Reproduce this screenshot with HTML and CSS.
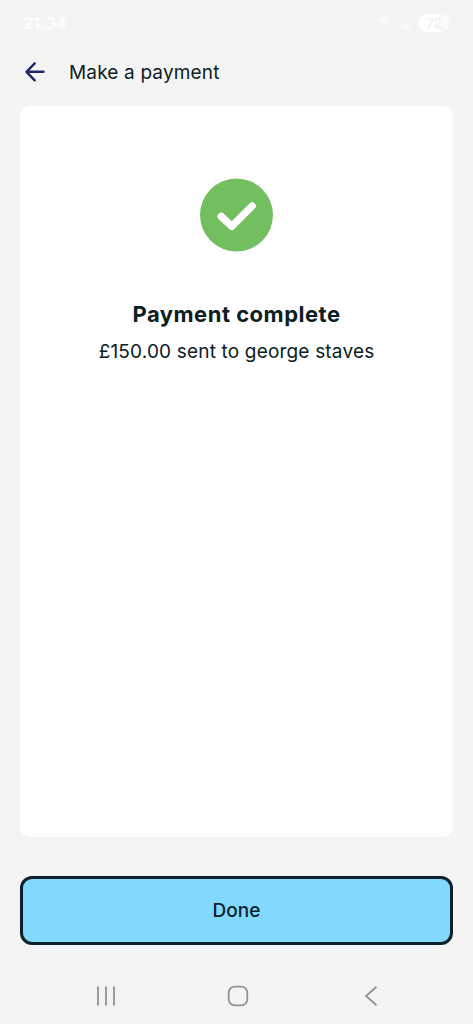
FILE: index.html
```html
<!DOCTYPE html>
<html lang="en">
<head>
<meta charset="utf-8">
<title>Make a payment</title>
<link rel="stylesheet" href="styles.css">
</head>
<body>
<div class="screen">
  <div class="status">
    <span class="clock">21:34</span>
    <div class="indicators">
      <svg width="17" height="14" viewBox="0 0 17 14"><path d="M1 3Q8.500-2 16 3L8.500 12Z" fill="#f8f8f6"/></svg>
      <svg width="10" height="11" viewBox="0 0 10 11"><path d="M0 11L10 1V11Z" fill="#f8f8f6"/></svg>
      <span class="battery"><span class="level">72</span></span>
    </div>
  </div>
  <header class="header">
    <svg class="back" width="20" height="20" viewBox="0 0 20 20" fill="none" stroke="#1f2863" stroke-width="2.400" stroke-linecap="round" stroke-linejoin="round"><path d="M18.500 9.800H1.500M9.700 1.300L1.500 9.800L9.700 18.300"/></svg>
    <h1 class="heading">Make a payment</h1>
  </header>
  <main class="card">
    <svg class="tick" width="74" height="74" viewBox="0 0 74 74"><circle cx="36.500" cy="37" r="36.500" fill="#73be5f"/><path d="M21.200 38.500L31.800 48.300L52.200 28" fill="none" stroke="#fff" stroke-width="7.400" stroke-linecap="round" stroke-linejoin="round"/></svg>
    <h2 class="title">Payment complete</h2>
    <p class="detail">£150.00 sent to george staves</p>
  </main>
  <button class="done"><span class="done-label">Done</span></button>
  <nav class="navbar">
    <svg width="20" height="20" viewBox="0 0 20 20" stroke="#929292" stroke-width="1.800"><path d="M2 .5V19.500M10 .5V19.500M18 .5V19.500"/></svg>
    <svg class="home" width="22" height="22" viewBox="0 0 22 22" fill="none" stroke="#929292" stroke-width="1.800"><rect x="1.700" y="1.700" width="18.600" height="18.600" rx="6"/></svg>
    <svg width="14" height="22" viewBox="0 0 14 22" fill="none" stroke="#929292" stroke-width="1.800"><path d="M12.500 1.800L2 11L12.500 20.200"/></svg>
  </nav>
</div>
</body>
</html>
```
FILE: styles.css
```css
* { box-sizing: border-box; }
body { margin: 0; background: #f4f4f4; font-family: Inter, "Liberation Sans", sans-serif; color: #0c2024; }
.screen { height: 1024px; padding: 0 20px; display: flex; flex-direction: column; overflow: hidden; }
.status { height: 46px; padding: 0 3px; display: flex; align-items: center; justify-content: space-between; color: #fdfdfb; }
.clock { font-size: 16px; font-weight: 600; letter-spacing: 0.3px; }
.indicators { display: flex; align-items: center; gap: 8px; }
.battery { width: 32px; height: 18px; border-radius: 9px; background: linear-gradient(90deg, #fff 65%, #fafafa 65%); display: flex; align-items: center; justify-content: center; }
.level { font-size: 13px; line-height: 16px; font-weight: 700; color: #f1f1f1; }
.header { height: 60px; padding: 0 5px 8px; display: flex; align-items: center; gap: 24px; }
.back { display: block; }
.heading { margin: 0; padding-top: 2px; font-size: 19px; line-height: 26px; font-weight: 400; letter-spacing: 0.16px; }
.card { height: 731px; border-radius: 10px; background: #fff; display: flex; flex-direction: column; align-items: center; padding-top: 72px; }
.tick { display: block; }
.title { margin: 47px 0 0; font-size: 22px; line-height: 30px; font-weight: 700; letter-spacing: 0.5px; white-space: nowrap; }
.detail { margin: 10px 0 0; font-size: 19px; line-height: 26px; letter-spacing: 0.18px; white-space: nowrap; }
.done { margin: 39px 0 0; width: 100%; height: 69px; padding: 0; border: 3px solid #0b212c; border-radius: 12px; background: #82d9ff; color: #0b212c; font-family: inherit; display: flex; align-items: center; justify-content: center; }
.done-label { font-size: 19px; line-height: 26px; font-weight: 500; }
.navbar { height: 78px; padding: 23px 75px 0 76px; display: flex; align-items: center; justify-content: space-between; }
.home { margin-right: 4px; }
```
